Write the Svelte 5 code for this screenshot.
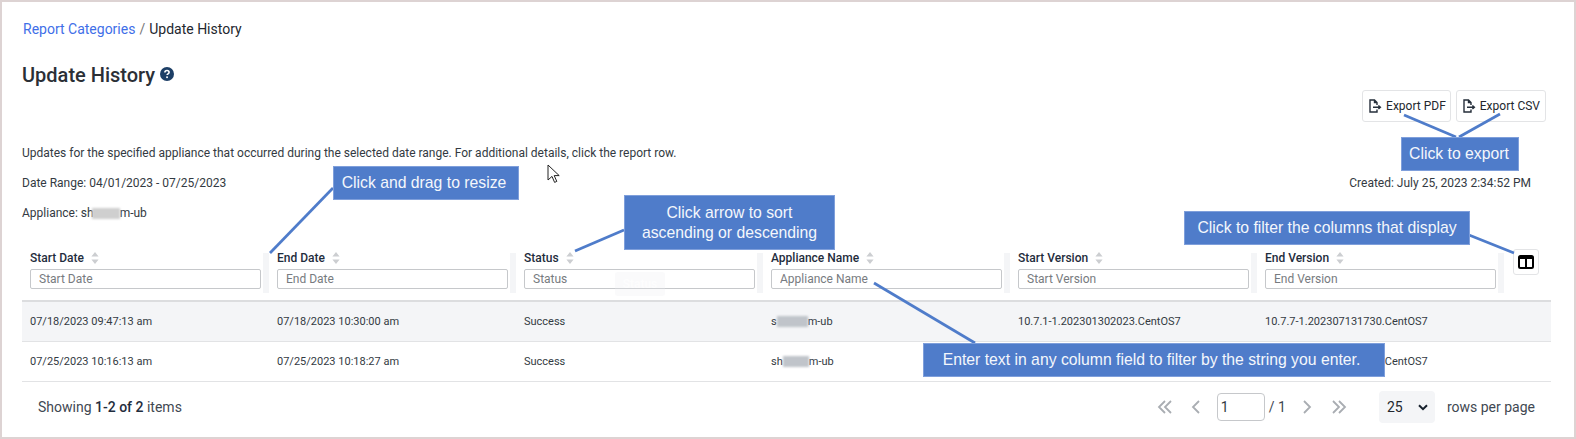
<script>
  const columns = ['Start Date', 'End Date', 'Status', 'Appliance Name', 'Start Version', 'End Version'];

  const rows = [
    {
      start: '07/18/2023 09:47:13 am',
      end: '07/18/2023 10:30:00 am',
      status: 'Success',
      nameA: 's',
      nameB: 'm-ub',
      blur: 31,
      from: '10.7.1-1.202301302023.CentOS7',
      to: '10.7.7-1.202307131730.CentOS7'
    },
    {
      start: '07/25/2023 10:16:13 am',
      end: '07/25/2023 10:18:27 am',
      status: 'Success',
      nameA: 'sh',
      nameB: 'm-ub',
      blur: 26,
      from: '10.7.1-1.202307131730.CentOS7',
      to: '10.7.7-1.202307131730.CentOS7'
    }
  ];

  const leaders = [
    [270, 253, 333, 188],
    [575, 251, 624, 230],
    [874, 283, 975, 343],
    [1469, 235, 1514, 253],
    [1404, 115, 1456, 137],
    [1500, 114, 1459, 137]
  ];
</script>

<div class="page">
  <nav class="crumbs">
    <span class="link">Report Categories</span>
    <span class="slash">/</span>
    <span>Update History</span>
  </nav>

  <div class="title-row">
    <h1>Update History</h1>
    <svg class="help" viewBox="0 0 14 14" width="14" height="14">
      <circle cx="7" cy="7" r="7" fill="#1d3f66" />
      <path d="M4.9 5.4c0-1.2 1-1.9 2.1-1.9s2.1.7 2.1 1.8c0 1.5-2 1.5-2 2.8" fill="none" stroke="#fff" stroke-width="1.6" />
      <rect x="6.2" y="9.4" width="1.7" height="1.7" fill="#fff" />
    </svg>
  </div>

  <div class="exports">
    <button class="export">
      <svg viewBox="0 0 14 14" width="14" height="14">
        <path d="M9 6V3.5L6.5 1H2v12h7v-2.5M6.5 1v2.5H9M5 8.2h7M10.4 6.4l2 1.8-2 1.8" fill="none" stroke="#252e3a" stroke-width="1.4" />
      </svg>
      Export PDF
    </button>
    <button class="export">
      <svg viewBox="0 0 14 14" width="14" height="14">
        <path d="M9 6V3.5L6.5 1H2v12h7v-2.5M6.5 1v2.5H9M5 8.2h7M10.4 6.4l2 1.8-2 1.8" fill="none" stroke="#252e3a" stroke-width="1.4" />
      </svg>
      Export CSV
    </button>
  </div>

  <p class="desc">Updates for the specified appliance that occurred during the selected date range. For additional details, click the report row.</p>
  <div class="meta-row">
    <span>Date Range: 04/01/2023 - 07/25/2023</span>
    <span>Created: July 25, 2023 2:34:52 PM</span>
  </div>
  <p class="appliance">Appliance: sh<span class="smudge light"></span>m-ub</p>

  <div class="table">
    <div class="head">
      {#each columns as label}
        <div class="th">
          <div class="th-label">
            {label}
            <svg viewBox="0 0 8 12" width="8" height="12">
              <path d="M4 0l3.6 4.6H.4zM4 12L.4 7.4h7.2z" fill="#ccced1" />
            </svg>
          </div>
          <input class="filter" placeholder={label} />
        </div>
      {/each}
      <div class="th-tools">
        <button class="col-toggle" aria-label="Columns">
          <svg viewBox="0 0 16 14" width="16" height="14">
            <rect x="1" y="1" width="14" height="12" rx="1.5" fill="none" stroke="#000" stroke-width="2" />
            <rect x="1" y="1" width="14" height="3" fill="#000" />
            <rect x="7" y="1" width="2" height="12" fill="#000" />
          </svg>
        </button>
      </div>
    </div>

    {#each rows as row, i}
      <div class="tr" class:shaded={i === 0}>
        <div class="td">{row.start}</div>
        <div class="td">{row.end}</div>
        <div class="td">{row.status}</div>
        <div class="td">{row.nameA}<span class="smudge" style="width: {row.blur}px"></span>{row.nameB}</div>
        <div class="td">{row.from}</div>
        <div class="td">{row.to}</div>
      </div>
    {/each}

    <div class="foot">
      <div>Showing <b>1-2 of 2</b> items</div>
      <div class="pager">
        <svg class="nav first" viewBox="0 0 16 14" width="16" height="14"><path d="M8 1L2 7l6 6M14 1L8 7l6 6" /></svg>
        <svg class="nav prev" viewBox="0 0 9 14" width="9" height="14"><path d="M8 1L2 7l6 6" /></svg>
        <input class="page-input" value="1" />
        <span class="of">/ 1</span>
        <svg class="nav next" viewBox="0 0 9 14" width="9" height="14"><path d="M1 1l6 6-6 6" /></svg>
        <svg class="nav last" viewBox="0 0 16 14" width="16" height="14"><path d="M2 1l6 6-6 6M8 1l6 6-6 6" /></svg>
        <div class="per-page">
          25
          <svg viewBox="0 0 10 7" width="10" height="7"><path d="M1 1.2l4 4 4-4" fill="none" stroke="#16202c" stroke-width="2" /></svg>
        </div>
        <span>rows per page</span>
      </div>
    </div>
  </div>

  <!-- annotations laid over the screenshot -->
  <div class="ghost">Status</div>
  <svg class="leaders" width="1576" height="439">
    {#each leaders as [x1, y1, x2, y2]}
      <line {x1} {y1} {x2} {y2} />
    {/each}
  </svg>
  <svg class="cursor" viewBox="0 0 13 20" width="13" height="20">
    <path d="M1 1v15l4-3.6 2.6 6 2.2-1-2.6-5.8h5z" fill="#fff" stroke="#222" stroke-width="1" />
  </svg>
  <div class="note drag">Click and drag to resize</div>
  <div class="note sort-note">Click arrow to sort<br />ascending or descending</div>
  <div class="note export-note">Click to export</div>
  <div class="note filter-note">Click to filter the columns that display</div>
  <div class="note enter-note">Enter text in any column field to filter by the string you enter.</div>
</div>

<style>
  :global(body) {
    margin: 0;
    background: #fff;
  }

  .page {
    position: relative;
    box-sizing: border-box;
    width: 1576px;
    height: 439px;
    padding: 19px 23px 0 20px;
    border: 2px solid #ddd3d3;
    font-family: Roboto, "Liberation Sans", sans-serif;
    font-size: 12px;
    color: #333a42;
    overflow: hidden;
  }

  .crumbs {
    height: 16px;
    line-height: 16px;
    margin-left: 1px;
    font-size: 14px;
    display: flex;
    gap: 4px;
    color: #23272e;
  }

  .link {
    color: #3f6fe8;
  }

  .slash {
    color: #777;
  }

  .title-row {
    display: flex;
    align-items: center;
    gap: 5px;
    margin-top: 24px;
    height: 28px;
  }

  h1 {
    margin: 0;
    font-size: 20px;
    font-weight: 500;
    line-height: 28px;
    color: #2b2f36;
  }

  .help {
    margin-top: -3px;
  }

  .exports {
    display: flex;
    justify-content: flex-end;
    gap: 5px;
    margin-top: 1px;
    padding-right: 5px;
  }

  .export {
    display: flex;
    align-items: center;
    gap: 4px;
    box-sizing: border-box;
    height: 32px;
    padding: 0 5px;
    background: #fff;
    border: 1px solid #e3e4e6;
    border-radius: 3px;
    font: 12px Roboto, sans-serif;
    color: #23272e;
    white-space: nowrap;
  }

  .export:first-child {
    padding-right: 4px;
  }

  .desc,
  .appliance {
    margin: 0;
    height: 16px;
    line-height: 16px;
    white-space: nowrap;
  }

  .desc {
    margin-top: 23px;
  }

  .meta-row {
    display: flex;
    justify-content: space-between;
    height: 16px;
    line-height: 16px;
    margin-top: 14px;
    padding-right: 20px;
  }

  .appliance {
    margin-top: 14px;
    display: flex;
    align-items: center;
  }

  .smudge {
    display: inline-block;
    height: 11px;
    background: #c0c4ca;
    filter: blur(0.8px);
  }

  .smudge.light {
    width: 28px;
    margin-left: -2px;
    background: #cfcfcf;
  }

  .table {
    margin-top: 31px;
  }

  .head {
    display: grid;
    grid-template-columns: repeat(6, 247px) 47px;
    height: 48px;
    border-bottom: 2px solid #dcdddf;
  }

  .th {
    position: relative;
    box-sizing: border-box;
    padding: 0 12px 0 8px;
  }

  .th::after {
    content: "";
    position: absolute;
    right: 0;
    top: 1px;
    width: 6px;
    height: 40px;
    background: #f4f5f7;
  }

  .th-label {
    display: flex;
    align-items: center;
    gap: 7px;
    height: 16px;
    line-height: 16px;
    margin-top: -2px;
    font-weight: 500;
    color: #1f2d3d;
  }

  .filter {
    display: block;
    box-sizing: border-box;
    width: 231px;
    height: 20px;
    margin-top: 3px;
    padding: 0 8px;
    border: 1px solid #c6c8cb;
    border-radius: 2px;
    font: 12px Roboto, sans-serif;
    background: #fff;
  }

  .filter::placeholder {
    color: #777b80;
    opacity: 1;
  }

  .th-tools {
    display: flex;
    padding-left: 9px;
    align-items: flex-start;
  }

  .col-toggle {
    display: flex;
    align-items: center;
    justify-content: center;
    box-sizing: border-box;
    width: 26px;
    height: 26px;
    margin-top: -3px;
    padding: 0;
    background: #fff;
    border: 1px solid #e3e4e6;
    border-radius: 3px;
  }

  .tr {
    display: grid;
    grid-template-columns: repeat(6, 247px) 47px;
    height: 40px;
    align-items: center;
    border-bottom: 1px solid #e2e3e5;
    box-sizing: border-box;
    font-size: 11px;
    color: #333a42;
  }

  .tr.shaded {
    background: #f4f5f7;
  }

  .tr:last-of-type {
    border-bottom-width: 2px;
    height: 41px;
  }

  .td {
    display: flex;
    align-items: center;
    padding-left: 8px;
    white-space: nowrap;
  }

  .foot {
    display: flex;
    justify-content: space-between;
    align-items: center;
    height: 50px;
    padding: 0 16px;
    font-size: 14px;
    color: #3f4852;
  }

  .foot b {
    font-weight: 500;
    color: #1f2d3d;
  }

  .pager {
    display: flex;
    align-items: center;
  }

  .nav path {
    fill: none;
    stroke: #a9adb2;
    stroke-width: 1.8;
  }

  .first {
    margin-right: 18px;
  }

  .prev {
    margin-right: 17px;
  }

  .next {
    margin-right: 19px;
  }

  .last {
    margin-right: 32px;
  }

  .page-input {
    box-sizing: border-box;
    width: 48px;
    height: 28px;
    padding: 0 3px;
    border: 1px solid #c6c8cb;
    border-radius: 4px;
    font: 14px Roboto, sans-serif;
    color: #333a42;
  }

  .of {
    margin: 0 17px 0 4px;
  }

  .per-page {
    display: flex;
    align-items: center;
    justify-content: space-between;
    box-sizing: border-box;
    width: 56px;
    height: 32px;
    margin-right: 12px;
    padding: 0 7px 0 8px;
    background: #f4f5f7;
    border-radius: 4px;
    color: #23272e;
  }

  .ghost {
    position: absolute;
    left: 613px;
    top: 270px;
    width: 50px;
    height: 24px;
    line-height: 24px;
    text-align: center;
    font-weight: 500;
    color: rgba(255, 255, 255, 0.7);
    background: rgba(235, 236, 239, 0.25);
    border-radius: 3px;
  }

  .leaders {
    position: absolute;
    left: -2px;
    top: -2px;
    pointer-events: none;
  }

  .leaders line {
    stroke: #4f7cca;
    stroke-width: 2.7;
  }

  .cursor {
    position: absolute;
    left: 545px;
    top: 162px;
  }

  .note {
    position: absolute;
    box-sizing: border-box;
    display: flex;
    align-items: center;
    justify-content: center;
    text-align: center;
    background: #4f7cca;
    border: 1px solid #7f9fdb;
    color: #f4f7fc;
    font: 15.75px/20px "Liberation Sans", Arial, sans-serif;
    white-space: nowrap;
  }

  .drag {
    left: 331px;
    top: 164px;
    width: 186px;
    height: 34px;
    padding-right: 4px;
  }

  .sort-note {
    left: 622px;
    top: 193px;
    width: 211px;
    height: 55px;
  }

  .export-note {
    left: 1399px;
    top: 135px;
    width: 118px;
    height: 34px;
    padding-right: 2px;
  }

  .filter-note {
    left: 1182px;
    top: 209px;
    width: 286px;
    height: 34px;
  }

  .enter-note {
    left: 921px;
    top: 341px;
    width: 462px;
    height: 34px;
    padding-right: 5px;
  }
</style>
